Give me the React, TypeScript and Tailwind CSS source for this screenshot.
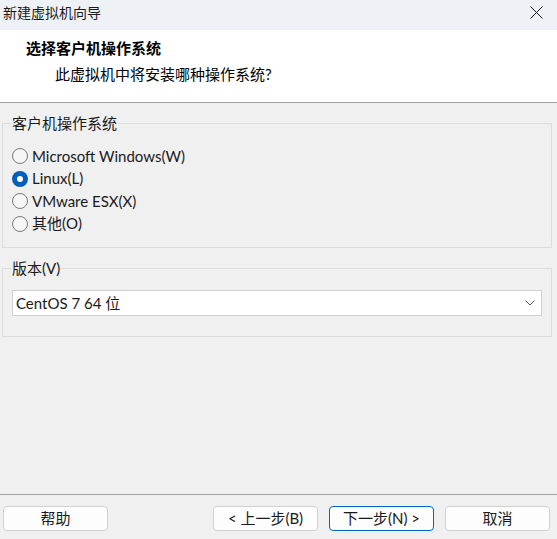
import React from "react";

const FONT = { fontFamily: '"Lato", "Noto Sans CJK SC", sans-serif' };

function Radio({ checked, label }: { checked?: boolean; label: string }) {
  return (
    <div className="flex h-[22.5px] items-center">
      {checked ? (
        <span className="ml-[9px] flex h-[16px] w-[16px] items-center justify-center rounded-full bg-[#005fb8]">
          <span className="h-[6px] w-[6px] rounded-full bg-white" />
        </span>
      ) : (
        <span className="ml-[9px] h-[16px] w-[16px] rounded-full border border-[#7a7a7a] bg-[#f6f6f6]" />
      )}
      <span className="ml-[4px] text-[15px] leading-none text-[#1a1a1a]">{label}</span>
    </div>
  );
}

function Btn({ label, primary }: { label: string; primary?: boolean }) {
  return (
    <button
      className={
        "flex h-[25px] w-[105px] items-center justify-center rounded-[4px] bg-[#fdfdfd] text-[15px] leading-none text-[#1a1a1a] " +
        (primary ? "border border-[#0067c0]" : "border border-[#d0d0d0]")
      }
    >
      {label}
    </button>
  );
}

export default function App() {
  return (
    <div className="flex h-[539px] w-[557px] flex-col bg-[#f0f0f0]" style={FONT}>
      {/* title bar */}
      <div className="flex h-[30px] items-start bg-[#eef2f7]">
        <div className="flex h-[24px] flex-1 items-center pl-[3px] text-[14px] text-[#1a1a1a]">新建虚拟机向导</div>
        <div className="flex h-[24px] w-[40px] items-center justify-center pr-[2px]">
          <svg width="13" height="13" viewBox="0 0 13 13">
            <path d="M0.5 0.5 L12.5 12.5 M12.5 0.5 L0.5 12.5" stroke="#1a1a1a" strokeWidth="1" />
          </svg>
        </div>
      </div>
      {/* header */}
      <div className="h-[73px] border-b border-[#a0a0a0] bg-white">
        <div className="pl-[26px] pt-[8px] text-[15px] font-bold leading-[20px] text-[#000]">选择客户机操作系统</div>
        <div className="pl-[55px] pt-[6px] text-[15px] leading-[20px] text-[#000]">此虚拟机中将安装哪种操作系统?</div>
      </div>
      {/* body */}
      <div className="flex flex-1 flex-col pl-[2px] pr-[5px] pt-[10px]">
        <fieldset className="border border-[#dcdcdc] pb-[11px] pl-[8px]">
          <legend className="px-[1px] text-[15px] leading-[20px] text-[#1a1a1a]">客户机操作系统</legend>
          <div className="-ml-[8px] pt-[12px] pb-[1px]">
            <Radio label="Microsoft Windows(W)" />
            <Radio checked label="Linux(L)" />
            <Radio label="VMware ESX(X)" />
            <Radio label="其他(O)" />
          </div>
        </fieldset>
        <fieldset className="mt-[10px] border border-[#dcdcdc] pb-[20px] pl-[9px] pr-[9px]">
          <legend className="-ml-[1px] px-[1px] text-[15px] leading-[20px] text-[#1a1a1a]">版本(V)</legend>
          <div className="pt-[12px]">
            <div className="flex h-[26px] items-center justify-between border border-[#d0d0d0] bg-white pl-[3px] pr-[6px] text-[15px] text-[#1a1a1a]">
              <span>CentOS 7 64 位</span>
              <svg width="10" height="6" viewBox="0 0 10 6">
                <path d="M0.5 0.5 L5 5 L9.5 0.5" stroke="#555" strokeWidth="1" fill="none" />
              </svg>
            </div>
          </div>
        </fieldset>
      </div>
      {/* footer */}
      <div className="flex h-[45px] items-start border-t border-[#a0a0a0] pl-[3px] pr-[7px] pt-[11px]">
        <Btn label="帮助" />
        <div className="flex-1" />
        <Btn label="< 上一步(B)" />
        <div className="w-[11px]" />
        <Btn primary label="下一步(N) >" />
        <div className="w-[11px]" />
        <Btn label="取消" />
      </div>
    </div>
  );
}
